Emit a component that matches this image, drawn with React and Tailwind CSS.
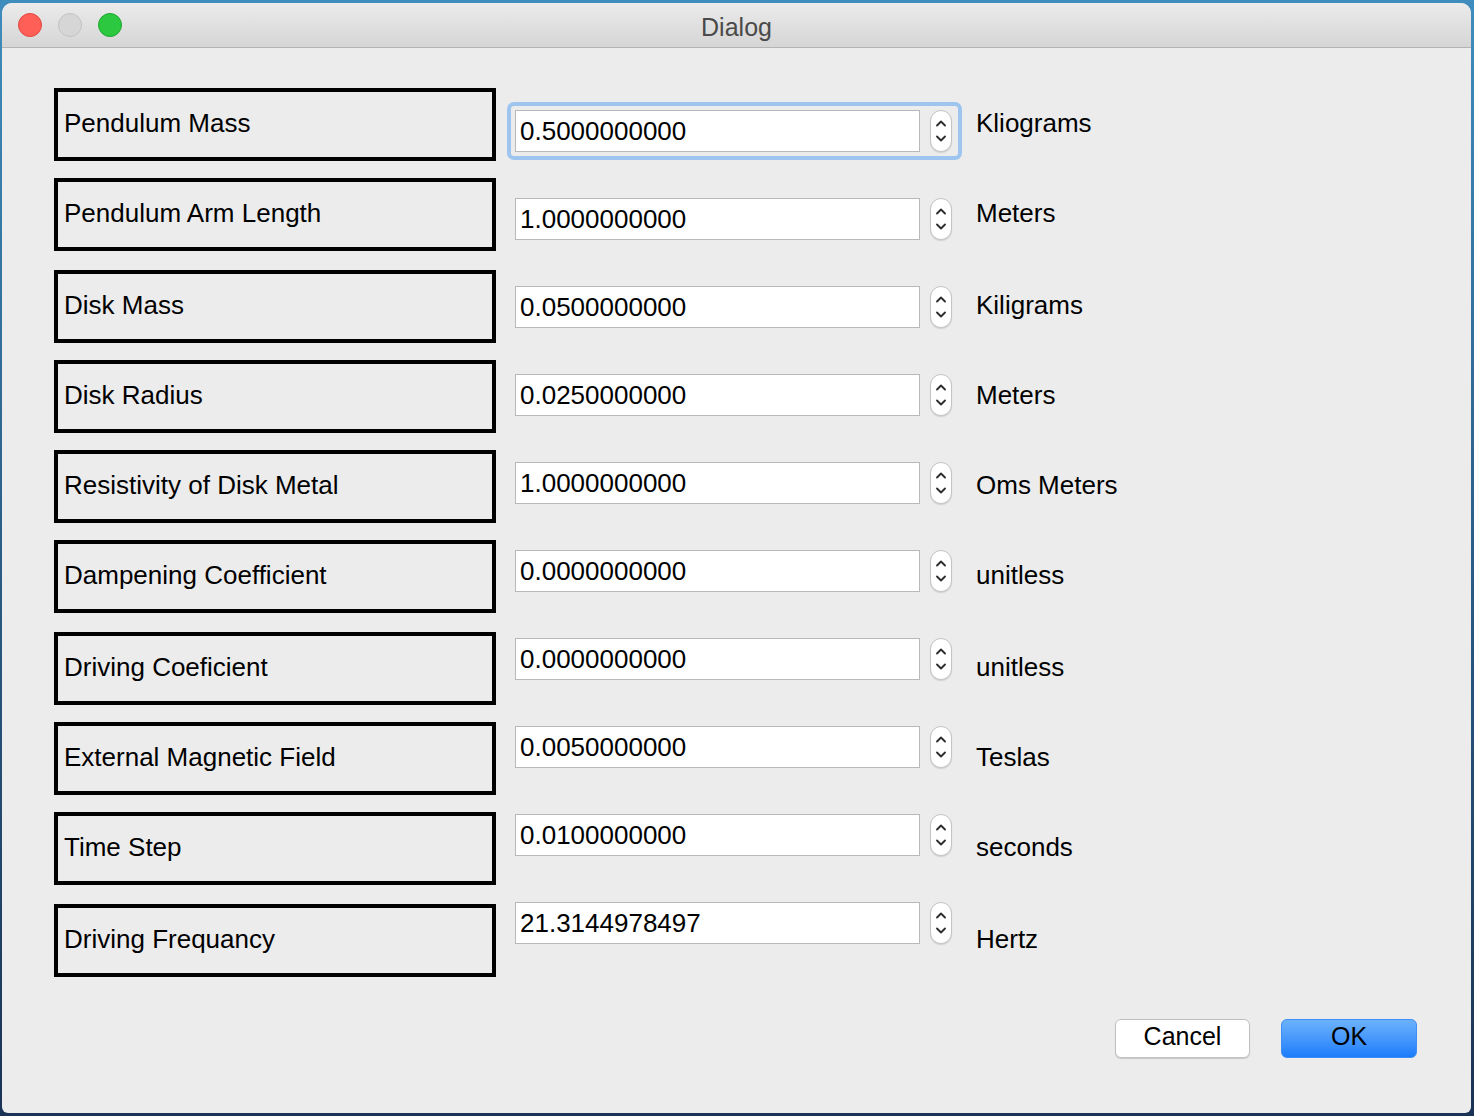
const rows = [
  { label: "Pendulum Mass", value: "0.5000000000", unit: "Kliograms", gap: "" },
  { label: "Pendulum Arm Length", value: "1.0000000000", unit: "Meters", gap: "" },
  { label: "Disk Mass", value: "0.0500000000", unit: "Kiligrams", gap: "mt-[2px]" },
  { label: "Disk Radius", value: "0.0250000000", unit: "Meters", gap: "" },
  { label: "Resistivity of Disk Metal", value: "1.0000000000", unit: "Oms Meters", gap: "" },
  { label: "Dampening Coefficient", value: "0.0000000000", unit: "unitless", gap: "" },
  { label: "Driving Coeficient", value: "0.0000000000", unit: "unitless", gap: "mt-[2px]" },
  { label: "External Magnetic Field", value: "0.0050000000", unit: "Teslas", gap: "" },
  { label: "Time Step", value: "0.0100000000", unit: "seconds", gap: "" },
  { label: "Driving Frequancy", value: "21.3144978497", unit: "Hertz", gap: "mt-[2px]" },
];

function Spinner() {
  return (
    <div className="flex h-[42px] w-[22px] flex-col items-center justify-center gap-[8px] rounded-[11px] border border-[#c4c4c4] bg-white shadow-[0_1px_1px_rgba(0,0,0,0.12)]">
      <svg width="12" height="8" viewBox="0 0 12 8">
        <path d="M2 6.5 L6 2.5 L10 6.5" fill="none" stroke="#2a2a2a" strokeWidth="1.8" strokeLinecap="round" strokeLinejoin="round" />
      </svg>
      <svg width="12" height="8" viewBox="0 0 12 8">
        <path d="M2 1.5 L6 5.5 L10 1.5" fill="none" stroke="#2a2a2a" strokeWidth="1.8" strokeLinecap="round" strokeLinejoin="round" />
      </svg>
    </div>
  );
}

function NumberField({ value, focused }) {
  return (
    <div
      className={
        focused
          ? "flex items-center gap-[10px] rounded-[7px] border-4 border-[#9ec5f0] py-1 pl-1 pr-[6px]"
          : "flex items-center gap-[10px] rounded-[7px] border-4 border-transparent py-1 pl-1 pr-[6px]"
      }
    >
      <div className="flex h-[42px] w-[405px] items-center border border-[#b9b9b9] bg-white pl-[4px] text-[26px] text-black">
        {value}
      </div>
      <Spinner />
    </div>
  );
}

export default function App() {
  return (
    <div className="h-[1116px] w-[1474px] bg-gradient-to-b from-[#3f8dbd] via-[#2a5d86] to-[#1a3354] pl-[2px] pr-[3px] pt-[3px] pb-[3px] font-['Liberation_Sans',Arial,sans-serif]">
      <div className="flex h-full flex-col overflow-hidden rounded-t-[10px] rounded-b-[6px] bg-[#ececec]">
        <div className="relative flex h-[45px] shrink-0 items-center border-b border-[#b4b4b4] bg-gradient-to-b from-[#ebebeb] to-[#d5d5d5]">
          <div className="flex items-center gap-[16px] pl-[16px]">
            <div className="h-[24px] w-[24px] rounded-full border border-[#e2463f] bg-[#ff5f57]" />
            <div className="h-[24px] w-[24px] rounded-full border border-[#c2c2c2] bg-[#d6d6d6]" />
            <div className="h-[24px] w-[24px] rounded-full border border-[#1fa631] bg-[#2bc840]" />
          </div>
          <div className="absolute inset-0 flex items-center justify-center pt-[5px] text-[25px] text-[#4a4a4a]">
            Dialog
          </div>
        </div>

        <div className="flex flex-1 flex-col">
          <div className="flex">
            <div className="ml-[52px] flex flex-col gap-[17px] pt-[40px]">
              {rows.map((r) => (
                <div
                  key={r.label}
                  className={`${r.gap} flex h-[73px] w-[442px] items-center border-4 border-black pb-[3px] pl-[6px] text-[26px] text-black`}
                >
                  {r.label}
                </div>
              ))}
            </div>
            <div className="ml-[11px] flex flex-col gap-[30px] pt-[54px]">
              {rows.map((r, i) => (
                <NumberField key={r.label} value={r.value} focused={i === 0} />
              ))}
            </div>
            <div className="ml-[14px] flex flex-col gap-[17px] pt-[40px]">
              {rows.map((r) => (
                <div key={r.label} className={`${r.gap} flex h-[73px] items-center pb-[3px] text-[26px] text-black`}>
                  {r.unit}
                </div>
              ))}
            </div>
          </div>

          <div className="mt-auto flex justify-end gap-[31px] pb-[55px] pr-[54px]">
            <button className="flex h-[39px] w-[135px] items-center justify-center rounded-[6px] border border-[#c0c0c0] bg-white pb-[3px] text-[25px] text-black shadow-[0_1px_1px_rgba(0,0,0,0.15)]">
              Cancel
            </button>
            <button className="flex h-[39px] w-[136px] items-center justify-center rounded-[6px] border border-[#3d8ef5] bg-gradient-to-b from-[#6cb2fb] to-[#1a7cfb] pb-[3px] text-[25px] text-black">
              OK
            </button>
          </div>
        </div>
      </div>
    </div>
  );
}
